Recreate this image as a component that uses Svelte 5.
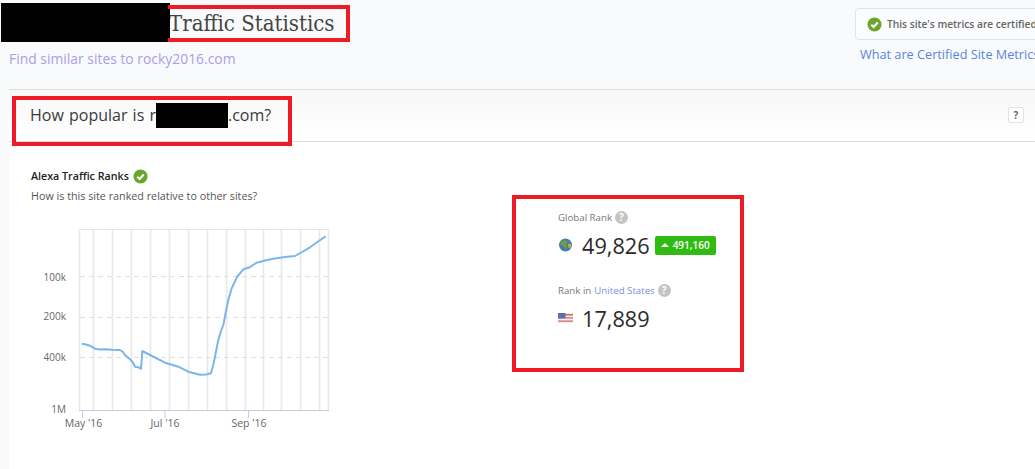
<script lang="ts">
  const gridX = [79.5, 93.5, 112.5, 131.5, 150.5, 169.5, 188.5, 207.5, 226.5, 245.5, 263.5, 281.5, 300.5, 319.5, 328.5];
  const yTicks = [
    { label: '100k', y: 276.5, textY: 280.5 },
    { label: '200k', y: 317.5, textY: 319.5 },
    { label: '400k', y: 357.5, textY: 360.5 }
  ];
  const xTicks = [
    { label: "May '16", x: 82.5, textX: 83.5 },
    { label: "Jul '16", x: 165, textX: 165 },
    { label: "Sep '16", x: 248.5, textX: 249 }
  ];
  const trend =
    '81.7,343.7 85,344.2 90,345.7 95,348.7 100,349.6 105,349.3 112,349.8 120,350 123,352 125,355 130,359.3 133,362.5 135,366.7 139,367.5 141,369 142.3,351 150,355 165,362.7 178.3,366.7 188.3,371.7 200,374.7 206,374.5 211,373.3 213,366 215,356.7 218.3,340 221,331 223.3,325 226,311 228.3,300 231.7,288.3 237,277 243.3,269.3 250,267.3 253,265 256.7,262.7 265,260.5 273.3,258.7 285,257 295,256 302,252 310,247.3 318,241.5 325.7,236.3';
</script>

<div class="page">
  <header class="top">
    <div class="top-left">
      <h1><span class="title-gap"></span>Traffic Statistics</h1>
      <a class="similar" href="#similar">Find similar sites to rocky2016.com</a>
    </div>
    <div class="top-right">
      <div class="certified">
        <svg class="check" viewBox="0 0 16 16"><circle cx="8" cy="8" r="7.5" fill="#6aa52c" /><path d="M4.5 8.3 7 10.6 11.5 5.8" fill="none" stroke="#fff" stroke-width="2.2" /></svg>
        <span>This site's metrics are certified</span>
      </div>
      <a class="what" href="#certified">What are Certified Site Metrics?</a>
    </div>
  </header>

  <main class="panel">
    <div class="section-head">
      <h2>How popular is r<span class="domain-gap"></span>.com?</h2>
      <span class="help-box">?</span>
    </div>

    <div class="section-body">
      <div class="ranks-col">
        <div class="ranks-title">
          Alexa Traffic Ranks
          <svg class="check" viewBox="0 0 16 16"><circle cx="8" cy="8" r="7.5" fill="#6aa52c" /><path d="M4.5 8.3 7 10.6 11.5 5.8" fill="none" stroke="#fff" stroke-width="2.2" /></svg>
        </div>
        <p class="ranks-sub">How is this site ranked relative to other sites?</p>
        <svg class="chart" width="310" height="210" viewBox="31 225 310 210">
          <rect x="79.5" y="229.5" width="249" height="180.5" fill="#fff" />
          {#each gridX as x}
            <line x1={x} x2={x} y1="229" y2="410" stroke="#e8e8e8" stroke-width="1.6" />
          {/each}
          <line x1="79" x2="329" y1="229.5" y2="229.5" stroke="#e6e6e6" />
          {#each yTicks as t}
            <line x1="80" x2="328" y1={t.y} y2={t.y} stroke="#e0e0e0" stroke-dasharray="5 4" />
            <text class="axis" x="66" y={t.textY} text-anchor="end">{t.label}</text>
          {/each}
          <text class="axis" x="66" y="413" text-anchor="end">1M</text>
          <line x1="79" x2="329" y1="410.5" y2="410.5" stroke="#c0d0e0" />
          {#each xTicks as t}
            <line x1={t.x} x2={t.x} y1="410" y2="418" stroke="#c0d0e0" />
            <text class="axis month" x={t.textX} y="427" text-anchor="middle">{t.label}</text>
          {/each}
          <polyline points={trend} fill="none" stroke="#7cb5ec" stroke-width="2" stroke-linejoin="round" />
        </svg>
      </div>

      <div class="stats-col">
        <div class="stat">
          <div class="stat-label">Global Rank <span class="q">?</span></div>
          <div class="stat-row">
            <svg class="flag" viewBox="0 0 14 14">
              <circle cx="7" cy="7" r="6.5" fill="#3f7fb0" />
              <path d="M2 4.5 6 2 9 3.5 7.5 6 9 8 7 11.5 5.5 8.5 3 7.5Z" fill="#7f9a38" />
              <path d="M9.5 6 12.5 6 12 10 10 9.5Z" fill="#d9b23a" />
            </svg>
            <span class="rank">49,826</span>
            <span class="delta"><i class="up"></i>491,160</span>
          </div>
        </div>
        <div class="stat second">
          <div class="stat-label">Rank in <a href="#us">United States</a> <span class="q">?</span></div>
          <div class="stat-row">
            <svg class="flag" viewBox="0 0 15 10">
              <rect width="15" height="10" fill="#f3eef0" />
              <path d="M0 1h15v1.4H0zM0 4.2h15v1.4H0zM0 7.4h15v1.4H0z" fill="#d9635f" />
              <rect width="7.5" height="5.4" fill="#5a6fb0" />
            </svg>
            <span class="rank">17,889</span>
          </div>
        </div>
      </div>
    </div>
  </main>

  <!-- redactions and annotations drawn on top of the page -->
  <div class="black b1"></div>
  <div class="black b2"></div>
  <div class="red r1"></div>
  <div class="red r2"></div>
  <div class="red r3"></div>
</div>

<style>
  :global(body) {
    margin: 0;
    overflow: hidden;
    background: #f9fafc;
  }
  .page {
    position: relative;
    width: 1035px;
    height: 469px;
    overflow: hidden;
    font-family: "Open Sans", sans-serif;
    color: #333;
    background: #f9fafc;
  }
  .top {
    display: flex;
    justify-content: space-between;
    height: 89px;
    box-sizing: border-box;
    padding: 8px 0 0 9px;
  }
  h1 {
    margin: 0;
    font-family: "DejaVu Serif Condensed", "DejaVu Serif", serif;
    font-size: 22px;
    font-weight: 400;
    line-height: 32px;
    color: #444;
  }
  .title-gap {
    display: inline-block;
    width: 160px;
  }
  .similar {
    display: block;
    margin-top: 9px;
    font-size: 13.9px;
    line-height: 20px;
    color: #a99ee8;
    text-decoration: none;
  }
  .top-right {
    width: 180px;
    flex: none;
  }
  .certified {
    display: flex;
    align-items: center;
    gap: 5px;
    width: 220px;
    height: 32px;
    box-sizing: border-box;
    padding-left: 11px;
    border: 1px solid #e2e2e2;
    border-radius: 4px;
    font-size: 10.2px;
    font-weight: 600;
    color: #666;
    background: #fbfcfd;
  }
  .check {
    width: 15px;
    height: 15px;
    flex: none;
  }
  .what {
    display: block;
    margin: 5px 0 0 5px;
    font-size: 12.7px;
    line-height: 18px;
    white-space: nowrap;
    color: #5a84e0;
    text-decoration: none;
  }
  .panel {
    margin-left: 9px;
    height: 380px;
    background: #fff;
  }
  .section-head {
    display: flex;
    align-items: flex-start;
    justify-content: space-between;
    height: 53px;
    box-sizing: border-box;
    padding: 14px 11px 0 21px;
    border-top: 1px solid #dedede;
    border-bottom: 1px solid #dedede;
    background: linear-gradient(#f7f7f7, #fff);
  }
  h2 {
    margin: 0;
    font-size: 16px;
    font-weight: 400;
    line-height: 22px;
    word-spacing: 1px;
    color: #3a3a3a;
  }
  .domain-gap {
    display: inline-block;
    width: 72px;
  }
  .help-box {
    width: 14px;
    height: 14px;
    margin-top: 3px;
    border: 1px solid #e2e2e2;
    border-radius: 2px;
    background: #fff;
    font-size: 10px;
    font-weight: 700;
    line-height: 14px;
    text-align: center;
    color: #666;
  }
  .section-body {
    display: flex;
    padding: 25px 0 0 22px;
  }
  .ranks-col {
    width: 527px;
    flex: none;
  }
  .ranks-title {
    display: flex;
    align-items: center;
    gap: 4px;
    height: 18px;
    font-size: 10.7px;
    font-weight: 600;
    color: #222;
  }
  .ranks-sub {
    margin: 2px 0 0;
    font-size: 10.76px;
    line-height: 18px;
    color: #555;
  }
  .chart {
    display: block;
    margin-top: 20px;
  }
  .axis {
    font-size: 10px;
    fill: #666;
  }
  .month {
    font-size: 10.5px;
  }
  .stats-col {
    padding-top: 42px;
  }
  .stat.second {
    margin-top: 19px;
  }
  .stat-label {
    display: flex;
    align-items: center;
    gap: 3px;
    height: 16px;
    font-size: 9.7px;
    color: #777;
  }
  .stat-label a {
    color: #7d8de0;
    text-decoration: none;
  }
  .q {
    width: 13px;
    height: 13px;
    border-radius: 50%;
    background: #c4c4c4;
    color: #fff;
    font-size: 10px;
    font-weight: 700;
    line-height: 13px;
    text-align: center;
  }
  .stat-row {
    display: flex;
    align-items: center;
    height: 36px;
    margin-top: 2px;
  }
  .flag {
    width: 15px;
    height: 14px;
    margin-right: 9px;
    flex: none;
  }
  .rank {
    font-size: 21.7px;
    color: #2b2b2b;
  }
  .delta {
    display: flex;
    align-items: center;
    gap: 4px;
    height: 19px;
    margin-left: 5px;
    padding: 0 6px;
    border-radius: 2px;
    background: #2fbb12;
    color: #fff;
    font-size: 10px;
    font-weight: 600;
  }
  .up {
    width: 0;
    height: 0;
    border-left: 4px solid transparent;
    border-right: 4px solid transparent;
    border-bottom: 4px solid #fff;
  }
  .black {
    position: absolute;
    background: #000;
  }
  .b1 {
    left: 1px;
    top: 3px;
    width: 169px;
    height: 39px;
  }
  .b2 {
    left: 156px;
    top: 103px;
    width: 72px;
    height: 25px;
  }
  .red {
    position: absolute;
    box-sizing: border-box;
    border: 4px solid #ed1c24;
  }
  .r1 {
    left: 168px;
    top: 5px;
    width: 182px;
    height: 37px;
    border-left: 0;
  }
  .r2 {
    left: 12px;
    top: 96px;
    width: 280px;
    height: 50px;
  }
  .r3 {
    left: 512px;
    top: 195px;
    width: 232px;
    height: 177px;
  }
</style>
